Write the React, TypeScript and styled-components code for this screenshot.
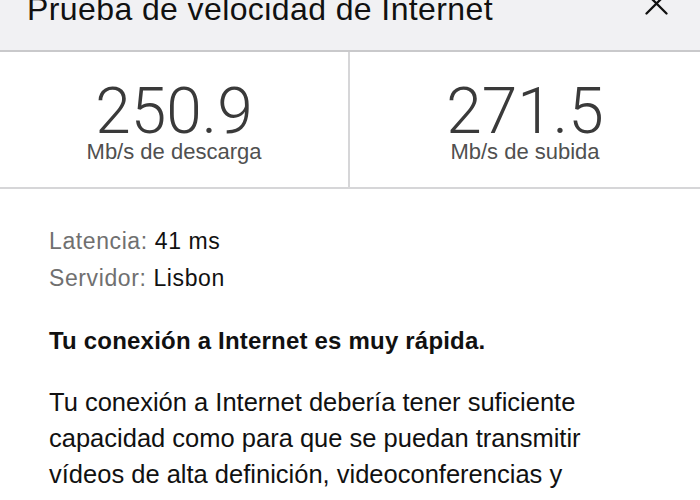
import styled, { createGlobalStyle } from "styled-components";

const GlobalStyle = createGlobalStyle`
    html, body {
        margin: 0;
        padding: 0;
        background: #FFF;
        overflow: hidden;
    }
    * {
        box-sizing: border-box;
    }
    body {
        font-family: "Liberation Sans", Arial, Helvetica, sans-serif;
        color: #1A1A1A;
    }
`;

interface Stat {
    value: string;
    label: string;
}

const STATS: Stat[] = [
    { value: "250.9", label: "Mb/s de descarga" },
    { value: "271.5", label: "Mb/s de subida" },
];

const DETAILS = [
    { label: "Latencia:", value: "41 ms" },
    { label: "Servidor:", value: "Lisbon" },
];

const CloseIcon = () => (
    <svg width="23" height="23" viewBox="0 0 23 23" fill="none">
        <path d="M1.5 1.5L21.5 21.5M21.5 1.5L1.5 21.5" stroke="#111" strokeWidth="2.3" strokeLinecap="round" />
    </svg>
);

const App = () => {
    return (
        <Page>
            <GlobalStyle />
            <Header>
                <Title>Prueba de velocidad de Internet</Title>
                <CloseButton aria-label="Cerrar">
                    <CloseIcon />
                </CloseButton>
            </Header>

            <StatsRow>
                {STATS.map((stat, i) => (
                    <StatCell key={stat.label} divided={i === 0}>
                        <StatValue>{stat.value}</StatValue>
                        <StatLabel>{stat.label}</StatLabel>
                    </StatCell>
                ))}
            </StatsRow>

            <Body>
                <DetailList>
                    {DETAILS.map((d) => (
                        <DetailRow key={d.label}>
                            <DetailLabel>{d.label}</DetailLabel> {d.value}
                        </DetailRow>
                    ))}
                </DetailList>

                <Verdict>Tu conexión a Internet es muy rápida.</Verdict>

                <Paragraph>
                    Tu conexión a Internet debería tener suficiente capacidad como para que se
                    puedan transmitir vídeos de alta definición, videoconferencias y videojuegos
                    en varios dispositivos al mismo tiempo.
                </Paragraph>
            </Body>
        </Page>
    );
};

export default App;

const Page = styled.div`
    width: 700px;
    height: 500px;
    overflow: hidden;
    background: #FFF;
`;

const Header = styled.header`
    display: flex;
    align-items: flex-end;
    height: 52px;
    padding: 0 32px 25px 27px;
    background: #F1F1F3;
    border-bottom: 2px solid #C9C9CB;
`;

const Title = styled.h1`
    margin: 0;
    font-size: 32px;
    line-height: 32px;
    font-weight: 400;
    letter-spacing: 0.4px;
    color: #111;
    white-space: nowrap;
`;

const CloseButton = styled.button`
    display: flex;
    margin: 0 0 10px auto;
    padding: 0;
    border: none;
    background: none;
    cursor: pointer;
`;

const StatsRow = styled.section`
    display: grid;
    grid-template-columns: 1fr 1fr;
    border-bottom: 2px solid #D6D6D8;
`;

const StatCell = styled.div<{ divided: boolean }>`
    display: flex;
    flex-direction: column;
    align-items: center;
    padding: 31px 0 24px;
    ${(props) => props.divided ? "border-right: 2px solid #D6D6D8;" : ""}
`;

const StatValue = styled.div`
    font-family: Roboto, "Liberation Sans", sans-serif;
    font-size: 64px;
    line-height: 58px;
    font-weight: 300;
    color: #3A3A3A;
`;

const StatLabel = styled.div`
    font-size: 22px;
    line-height: 22px;
    color: #505050;
`;

const Body = styled.main`
    display: flex;
    flex-direction: column;
    padding: 34px 51px 0 49px;
`;

const DetailList = styled.div`
    display: flex;
    flex-direction: column;
`;

const DetailRow = styled.div`
    font-size: 23px;
    line-height: 37px;
    letter-spacing: 0.6px;
    color: #111;
`;

const DetailLabel = styled.span`
    color: #707070;
`;

const Verdict = styled.p`
    margin: 26px 0 0;
    font-size: 24px;
    line-height: 36px;
    font-weight: 600;
    letter-spacing: 0.2px;
    color: #111;
`;

const Paragraph = styled.p`
    margin: 25px 0 0;
    font-size: 25.5px;
    line-height: 36px;
    color: #111;
`;
